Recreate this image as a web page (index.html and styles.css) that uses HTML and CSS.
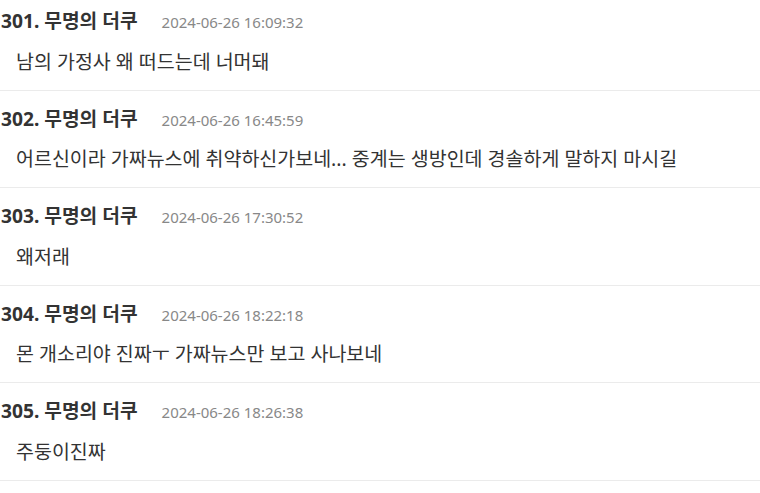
FILE: index.html
```html
<!DOCTYPE html>
<html lang="ko">
<head>
<meta charset="utf-8">
<link rel="stylesheet" href="styles.css">
</head>
<body>
<ul class="list">
  <li class="item">
    <div class="head"><span class="name">301. 무명의 더쿠</span><span class="time">2024-06-26 16:09:32</span></div>
    <div class="text">남의 가정사 왜 떠드는데 너머돼</div>
  </li>
  <li class="item">
    <div class="head"><span class="name">302. 무명의 더쿠</span><span class="time">2024-06-26 16:45:59</span></div>
    <div class="text">어르신이라 가짜뉴스에 취약하신가보네... 중계는 생방인데 경솔하게 말하지 마시길</div>
  </li>
  <li class="item">
    <div class="head"><span class="name">303. 무명의 더쿠</span><span class="time">2024-06-26 17:30:52</span></div>
    <div class="text">왜저래</div>
  </li>
  <li class="item">
    <div class="head"><span class="name">304. 무명의 더쿠</span><span class="time">2024-06-26 18:22:18</span></div>
    <div class="text">몬 개소리야 진짜ㅜ 가짜뉴스만 보고 사나보네</div>
  </li>
  <li class="item">
    <div class="head"><span class="name">305. 무명의 더쿠</span><span class="time">2024-06-26 18:26:38</span></div>
    <div class="text">주둥이진짜</div>
  </li>
</ul>
</body>
</html>
```
FILE: styles.css
```css
html, body {
  margin: 0;
  padding: 0;
  background: #fff;
}
body {
  font-family: "Noto Sans", "Noto Sans CJK KR", sans-serif;
  color: #333;
}
.list {
  list-style: none;
  margin: -7px 0 0 0;
  padding: 0;
}
.item {
  padding: 16px 0 16px 0;
  border-bottom: 1px solid #ebebeb;
}
.head {
  display: flex;
  align-items: baseline;
  gap: 24px;
  line-height: 24px;
  padding-left: 1px;
}
.name {
  font-size: 19.2px;
  font-weight: 700;
  color: #333;
}
.time {
  font-size: 15px;
  color: #888;
}
.text {
  margin-top: 15.5px;
  padding-left: 16px;
  font-size: 19.5px;
  line-height: 24px;
  color: #333;
}
```
